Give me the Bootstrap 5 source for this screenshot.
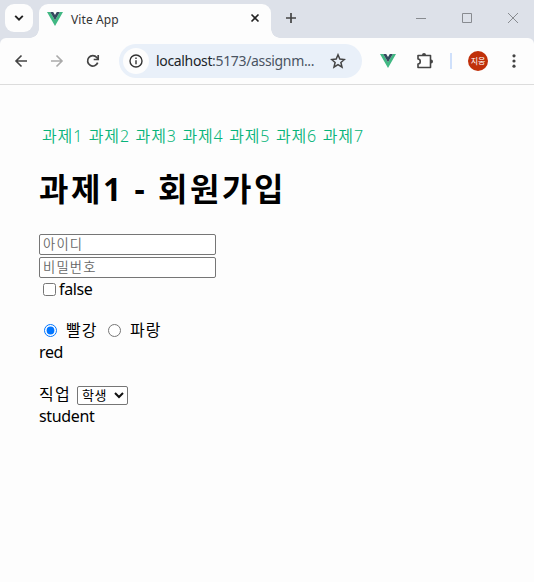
<!DOCTYPE html>
<html lang="ko">
<head>
<meta charset="utf-8">
<meta name="viewport" content="width=device-width, initial-scale=1">
<title>Vite App</title>
<link href="https://cdn.jsdelivr.net/npm/bootstrap@5.3.0/dist/css/bootstrap.min.css" rel="stylesheet">
<style>
body{font-family:"Noto Sans","Noto Sans CJK KR",sans-serif;background:#fdfdfd;color:#000;font-size:16px;line-height:21px;height:582px;overflow:hidden}
svg{display:block;flex:none}
header{background:#dde1e9}
.tabstrip{height:38px;padding-left:5px}
.tab-search{width:28px;margin-top:4px}
.tab-search span{width:28px;height:28px;background:#fdfdfd;border-radius:9px}
.tab-active{width:232px;height:34px;margin:4px 0 0 6px;background:#fdfdfd;border-radius:9px 9px 0 0;padding:0 10px 4px 8px;position:relative}
.tab-active::before,.tab-active::after{content:"";position:absolute;bottom:0;width:9px;height:9px}
.tab-active::before{left:-9px;background:radial-gradient(circle at 0 0,transparent 8.5px,#fdfdfd 9px)}
.tab-active::after{right:-9px;background:radial-gradient(circle at 100% 0,transparent 8.5px,#fdfdfd 9px)}
.tab-title{font-size:12px;margin-left:8px;color:#333;letter-spacing:.1px}
.new-tab{margin:12px 0 0 14px}
.toolbar{height:47px;background:#fdfdfd;border-bottom:1px solid #dcdcdc;padding-left:13px;border-radius:6px 6px 0 0}
.forward{margin-left:21px}
.reload{margin-left:19px}
.address{width:243px;height:34px;margin-left:18px;border-radius:17px;background:#e9f0f9;padding:0 16px 0 4px}
.site-info{width:26px;height:26px;background:#fdfdfd}
.url{font-size:14px;margin:-1px 0 0 7px;color:#4a5462;letter-spacing:-.34px}
.vue-ext{margin-left:18px}
.puzzle{margin-left:20px}
.split{width:2px;height:16px;background:#cfe0fb;margin-left:16px}
.avatar{width:20px;height:20px;background:#c0300a;color:#fff;font-size:8px;line-height:19px;margin-left:16px}
.dots{margin-left:24px}
.page{padding:41px 39px 0}
.tasks{padding-left:3px;gap:6.3px}
.tasks a{color:#08b47a;width:40.5px;white-space:nowrap;letter-spacing:.85px;font-weight:350}
h1.title{font-size:32px;line-height:44px;font-weight:700;margin:20px 0 23px;letter-spacing:2.5px;white-space:nowrap}
.field{display:block;width:177px;height:21px;border:1px solid #767676;border-radius:2px;padding:0 3px 2px;font-size:13.3px;line-height:16px;margin-bottom:2px;background:#fff;outline:0}
.field::placeholder{color:#666;opacity:1;font-weight:350;letter-spacing:1.2px}
.tick{width:13px;height:13px;margin:0;flex:none}
.agree{margin-top:-1px}
.agree .tick{margin:0 3px 1px 4px}
.latin{letter-spacing:-.35px}
.radios{margin:20px 0 1px}
.job-row{margin:21px 0 1px}
.radios .tick{margin-left:5px}
.radios span{margin-left:9px;width:31px;letter-spacing:1px;white-space:nowrap}
.radios span + .tick{margin-left:11px}
.job-label{width:32px;letter-spacing:1.3px;white-space:nowrap}
.job{width:51px;height:19px;border:1px solid #767676;border-radius:2px;font-size:13px;line-height:17px;padding:0 3px 0 4px;background:#fff;margin:1px 0 0 6px;letter-spacing:.6px}
</style>
<script src="https://cdn.jsdelivr.net/npm/bootstrap@5.3.0/dist/js/bootstrap.bundle.min.js"></script>
</head>
<body>
<header>
  <div class="tabstrip d-flex">
    <div class="tab-search"><span class="d-flex align-items-center justify-content-center"><svg width="10" height="8" viewBox="0 0 10 8" fill="none" stroke="#222" stroke-width="1.9"><path d="M1.2 1.8 5 5.6 8.8 1.8"/></svg></span></div>
    <div class="tab-active d-flex align-items-center">
      <svg width="16" height="14" viewBox="0 0 16 14"><path fill="#41b883" d="M0 0h3.2L8 8.2 12.8 0H16L8 14z"/><path fill="#34495e" d="M3.2 0h3L8 3.1 9.8 0h3L8 8.3z"/></svg>
      <span class="tab-title">Vite App</span>
      <svg class="ms-auto" width="12" height="12" viewBox="0 0 12 12" stroke="#222" stroke-width="1.6"><path d="m2.500 1.500 7 7m0-7-7 7"/></svg>
    </div>
    <svg class="new-tab" width="12" height="12" viewBox="0 0 12 12" stroke="#444" stroke-width="1.7"><path d="M1 6h10M6 1v10"/></svg>
    <svg class="ms-auto" width="118" height="36" viewBox="0 0 118 36" fill="none" stroke="#888b90"><path d="M0 18.500h10M46.500 13.500h9v9h-9zM92 13l10 10m0-10L92 23"/></svg>
  </div>
  <div class="toolbar d-flex align-items-center">
    <svg width="16" height="16" viewBox="0 0 16 16" fill="none" stroke="#444" stroke-width="1.6"><path d="M14 8H3m5.500-5.500L3 8l5.500 5.500"/></svg>
    <svg class="forward" width="16" height="16" viewBox="0 0 16 16" fill="none" stroke="#aaa" stroke-width="1.6"><path d="M1 8h11M6.500 2.500 12 8l-5.500 5.500"/></svg>
    <svg class="reload" width="16" height="16" viewBox="0 0 16 16" fill="none" stroke="#444" stroke-width="1.7"><path d="M12.700 9.600A5.200 5.200 0 1 1 11.800 4.500L13 6"/><path d="M13.200 2v4.500H8.700"/></svg>
    <div class="address d-flex align-items-center">
      <span class="site-info rounded-circle d-flex align-items-center justify-content-center"><svg width="14" height="14" viewBox="0 0 14 14" fill="none" stroke="#333" stroke-width="1.4"><circle cx="7" cy="7" r="6"/><path d="M7 6.200v4M7 3.500v1.500"/></svg></span>
      <span class="url"><span class="text-dark">localhost</span>:5173/assignm...</span>
      <svg class="ms-auto" width="16" height="16" viewBox="0 0 16 16" fill="none" stroke="#444" stroke-width="1.500"><path d="m8 1.800 1.800 4.300 4.600.4-3.500 3 1.100 4.600-4-2.500-4 2.500 1.100-4.600-3.500-3 4.600-.4z"/></svg>
    </div>
    <svg class="vue-ext" width="16" height="14" viewBox="0 0 16 14"><path fill="#41b883" d="M0 0h3.200L8 8.200 12.800 0H16L8 14z"/><path fill="#34495e" d="M3.200 0h3L8 3.100 9.800 0h3L8 8.300z"/></svg>
    <svg class="puzzle" width="18" height="18" viewBox="0 0 18 18" fill="none" stroke="#444" stroke-width="1.6" stroke-linejoin="round"><path d="M2 3.500h12.500V15.500H2v-3.500c3 0 3-5 0-5z"/><path fill="#444" stroke="none" d="M6 3a2 2 0 0 1 4 0zM15 7.500a2 2 0 0 1 0 4z"/></svg>
    <span class="split"></span>
    <span class="avatar rounded-circle text-center">지웅</span>
    <svg class="dots" width="4" height="16" viewBox="0 0 4 16" fill="#444"><circle cx="2" cy="2.800" r="1.600"/><circle cx="2" cy="8" r="1.600"/><circle cx="2" cy="13.200" r="1.600"/></svg>
  </div>
</header>
<main class="page">
  <nav class="tasks d-flex">
    <a class="text-decoration-none">과제1</a>
    <a class="text-decoration-none">과제2</a>
    <a class="text-decoration-none">과제3</a>
    <a class="text-decoration-none">과제4</a>
    <a class="text-decoration-none">과제5</a>
    <a class="text-decoration-none">과제6</a>
    <a class="text-decoration-none">과제7</a>
  </nav>
  <h1 class="title">과제1 - 회원가입</h1>
  <form>
    <input class="field" type="text" placeholder="아이디">
    <input class="field" type="password" placeholder="비밀번호">
    <label class="agree d-flex align-items-center"><input class="tick" type="checkbox"><span class="latin">false</span></label>
    <div class="radios d-flex align-items-center">
      <input class="tick" type="radio" name="color" checked><span>빨강</span>
      <input class="tick" type="radio" name="color"><span>파랑</span>
    </div>
    <div class="latin">red</div>
    <div class="job-row d-flex align-items-center"><span class="job-label">직업</span>
      <span class="job d-flex align-items-center justify-content-between" role="listbox"><span>학생</span><svg width="10" height="8" viewBox="0 0 10 8" fill="none" stroke="#111" stroke-width="2"><path d="M1 2 5 6 9 2"/></svg></span></div>
    <div class="latin">student</div>
  </form>
</main>
</body>
</html>
